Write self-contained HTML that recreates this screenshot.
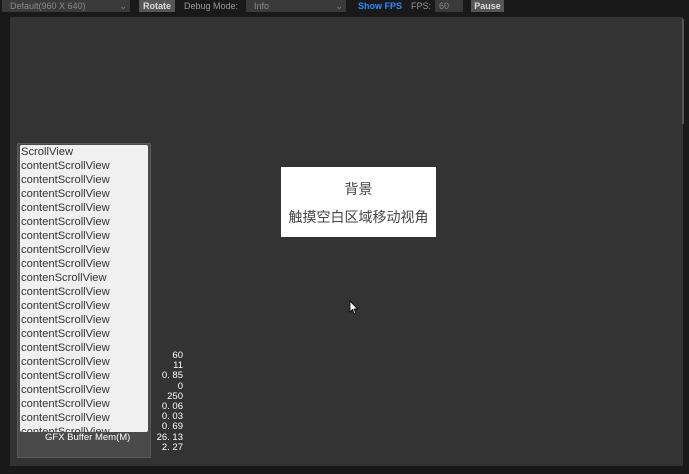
<!DOCTYPE html>
<html><head><meta charset="utf-8"><style>
*{margin:0;padding:0;box-sizing:border-box}
body{width:689px;height:474px;background:#191919;position:relative;overflow:hidden;font-family:"Liberation Sans","Noto Sans CJK SC",sans-serif}
.a{position:absolute}
.tb{font-size:9px;color:#999;line-height:12px}
.sel{background:#3a3a3a;color:#8a8a8a;height:12px;padding-left:8px}
.btn{background:#555;color:#ddd;font-weight:bold;height:12px;text-align:center}
#cv{left:10px;top:17px;width:673px;height:449px;background:#333}
#sp{left:17px;top:143px;width:134px;height:315px;background:#4a4a4a;border:1px solid #5a5a5a}
#wi{left:20px;top:145px;width:128px;height:287px;background:#f0f0f0;border-radius:2px;overflow:hidden;font-size:11.2px;color:#333;line-height:14px;padding-left:1px}
.st{font-size:9.5px;color:#fff;line-height:10.2px;text-align:right}
</style></head><body>
<div class="a tb sel" style="left:2px;top:0;width:128px">Default(960 X 640)<span style="position:absolute;right:3px">⌄</span></div>
<div class="a tb btn" style="left:139px;top:0;width:36px">Rotate</div>
<div class="a tb" style="left:184px;top:0">Debug Mode:</div>
<div class="a tb sel" style="left:246px;top:0;width:100px">Info<span style="position:absolute;right:3px">⌄</span></div>
<div class="a tb" style="left:358px;top:0;color:#2a8cff;font-weight:bold">Show FPS</div>
<div class="a tb" style="left:411px;top:0">FPS:</div>
<div class="a tb sel" style="left:435px;top:0;width:28px;padding-left:4px">60</div>
<div class="a tb btn" style="left:471px;top:0;width:33px">Pause</div>
<div class="a" id="cv"></div>
<div class="a" style="left:682px;top:19px;width:2px;height:105px;background:#555"></div>
<div class="a" id="sp"></div>
<div class="a" id="wi">ScrollView<br>contentScrollView<br>contentScrollView<br>contentScrollView<br>contentScrollView<br>contentScrollView<br>contentScrollView<br>contentScrollView<br>contentScrollView<br>contenScrollView<br>contentScrollView<br>contentScrollView<br>contentScrollView<br>contentScrollView<br>contentScrollView<br>contentScrollView<br>contentScrollView<br>contentScrollView<br>contentScrollView<br>contentScrollView<br>contentScrollView</div>
<div class="a st" style="left:140px;top:351px;width:43px">60<br>11<br>0. 85<br>0<br>250<br>0. 06<br>0. 03<br>0. 69<br>26. 13<br>2. 27</div>
<div class="a" style="left:45px;top:432px;font-size:9.5px;color:#fff">GFX Buffer Mem(M)</div>
<div class="a" style="left:281px;top:167px;width:155px;height:70px;background:#fff;color:#444;text-align:center;font-size:14px;line-height:28px;padding-top:8px">背景<br>触摸空白区域移动视角</div>
<svg class="a" style="left:349px;top:300px" width="10" height="16" viewBox="0 0 10 16"><path d="M1 1 L1 12 L3.5 9.5 L5.5 14 L7 13.3 L5 9 L8.5 9 Z" fill="#fff" stroke="#000" stroke-width="0.8"/></svg>
</body></html>
